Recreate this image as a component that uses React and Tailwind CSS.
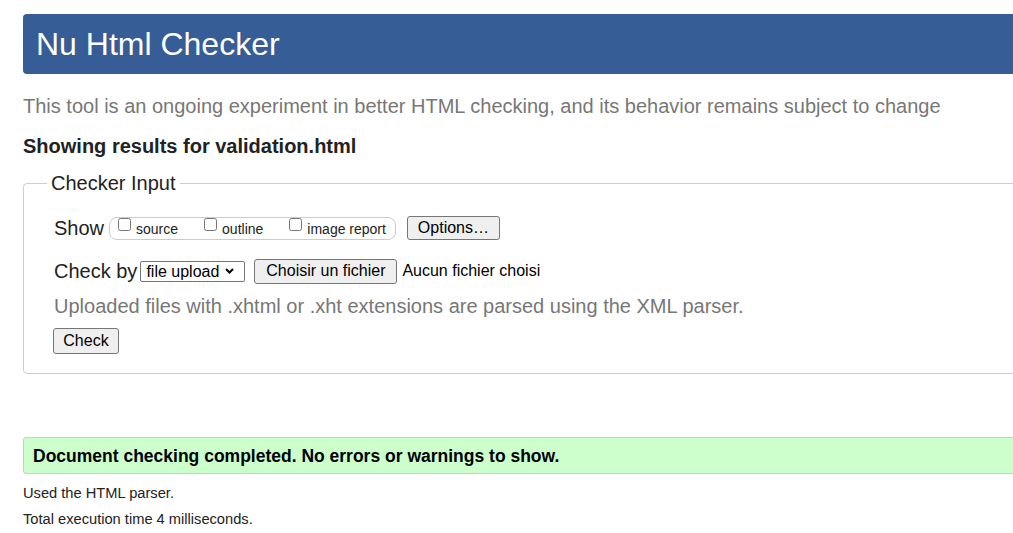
export default function App() {
  return (
    <div className="h-[533px] w-full overflow-hidden bg-white font-['Liberation_Sans',Arial,sans-serif] text-[#222]">
      <div className="w-[1100px] pl-[23px] pt-[14px]">
        {/* Bandeau titre */}
        <header className="flex h-[60px] items-center rounded-[4px] bg-[#365d95] pl-[13px]">
          <h1 className="text-[32px] leading-[40px] text-white">Nu Html Checker</h1>
        </header>

        <p className="mt-[20px] text-[20px] leading-[24px] text-[#777]">
          This tool is an ongoing experiment in better HTML checking, and its behavior remains subject to change
        </p>
        <p className="mt-[16px] text-[20px] font-bold leading-[24px] text-[#222]">
          Showing results for validation.html
        </p>

        {/* Formulaire */}
        <fieldset className="mt-[13px] rounded-[4px] border border-[#ccc] pb-[19px] pl-[30px] pt-[20px]">
          <legend className="-ml-[7px] px-[4px] text-[20px] leading-[24px]">Checker Input</legend>

          <div className="flex h-[26px] items-center">
            <span className="text-[20px] leading-[24px]">Show</span>
            <div className="ml-[5px] flex h-[23px] items-start gap-[26px] rounded-[8px] border border-[#ccc] pl-[8px] pr-[9px] text-[14px] leading-[16px]">
              {["source", "outline", "image report"].map((label) => (
                <label key={label} className="flex items-start">
                  <input type="checkbox" className="h-[13px] w-[13px]" />
                  <span className="ml-[5px] pt-[3px]">{label}</span>
                </label>
              ))}
            </div>
            <button
              type="button"
              className="ml-[11px] flex h-[24px] w-[93px] items-center justify-center rounded-[3px] border border-[#767676] bg-[#efefef] text-[16px] leading-[18px] text-black"
            >
              Options…
            </button>
          </div>

          <div className="mt-[17px] flex h-[26px] items-center text-[16px]">
            <span className="text-[20px] leading-[24px]">Check by</span>
            <div className="ml-[3px] flex h-[21px] w-[105px] items-center justify-between rounded-[2px] border border-[#767676] bg-white pl-[5px] pr-[10px] text-black">
              <span className="leading-[19px]">file upload</span>
              <svg width="9" height="6" viewBox="0 0 9 6" fill="none">
                <path d="M1 1l3.5 3.5L8 1" stroke="#000" strokeWidth="2" />
              </svg>
            </div>
            <button
              type="button"
              className="ml-[9px] flex h-[25px] w-[143px] items-center justify-center rounded-[3px] border border-[#767676] bg-[#efefef] leading-[18px] text-black"
            >
              Choisir un fichier
            </button>
            <span className="ml-[5px] leading-[18px] text-black">Aucun fichier choisi</span>
          </div>

          <p className="mt-[10px] text-[20px] leading-[24px] text-[#777]">
            Uploaded files with .xhtml or .xht extensions are parsed using the XML parser.
          </p>

          <button
            type="button"
            className="-ml-[1px] mt-[10px] flex h-[26px] w-[66px] items-center justify-center rounded-[3px] border border-[#767676] bg-[#efefef] text-[16px] leading-[18px] text-black"
          >
            Check
          </button>
        </fieldset>

        {/* Résultat */}
        <div className="mt-[63px] flex h-[37px] items-center rounded-l-[3px] border border-[#ccc] bg-[#ccffcc] pl-[9px]">
          <p className="text-[17.5px] font-bold leading-[22px] text-black">
            Document checking completed. No errors or warnings to show.
          </p>
        </div>
        <p className="mt-[9px] text-[14.67px] leading-[20px] text-[#222]">Used the HTML parser.</p>
        <p className="mt-[6px] text-[14.67px] leading-[20px] text-[#222]">Total execution time 4 milliseconds.</p>
      </div>
    </div>
  );
}
